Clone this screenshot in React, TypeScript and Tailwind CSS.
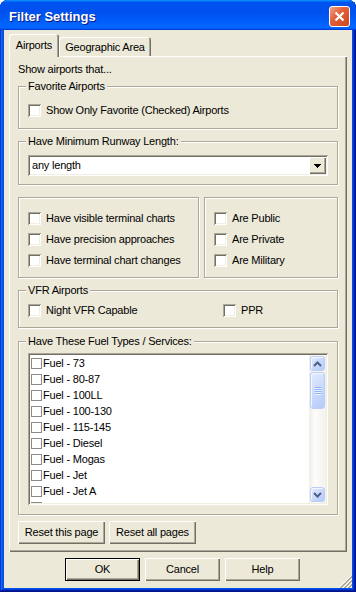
import type { ReactNode } from 'react';

// classic 3D edges (XP classic palette)
const RAISED = 'shadow-[inset_1px_1px_#fff,inset_-1px_-1px_#716f64,inset_-2px_-2px_#aca899]';
const SUNKEN = 'shadow-[inset_1px_1px_#aca899,inset_-1px_-1px_#fff,inset_2px_2px_#716f64,inset_-2px_-2px_#f1efe2]';
const ETCHED = 'border border-[#aca899] shadow-[inset_1px_1px_#fff,1px_1px_#fff]';

const FUELS = [
  'Fuel - 73',
  'Fuel - 80-87',
  'Fuel - 100LL',
  'Fuel - 100-130',
  'Fuel - 115-145',
  'Fuel - Diesel',
  'Fuel - Mogas',
  'Fuel - Jet',
  'Fuel - Jet A',
  'Fuel - Jet A-1',
];

// ─── Small controls ───────────────────────────────────────────────────────────

function CheckBox() {
  return <span className={`block h-[13px] w-[13px] shrink-0 bg-white ${SUNKEN}`} />;
}

function CheckRow({ label, className = '' }: { label: string; className?: string }) {
  return (
    <label className={`flex h-[13px] items-center gap-[5px] ${className}`}>
      <CheckBox />
      <span className="whitespace-nowrap">{label}</span>
    </label>
  );
}

function GroupBox({ title, className = '', children }: { title: string; className?: string; children: ReactNode }) {
  return (
    <fieldset className={`${ETCHED} ${className}`}>
      <legend className="ml-[7px] bg-[#ECE9D8] px-[2px] leading-[13px]">{title}</legend>
      {children}
    </fieldset>
  );
}

function Button({ label, width, isDefault }: { label: string; width: string; isDefault?: boolean }) {
  if (isDefault) {
    return (
      <div className={`h-[23px] ${width} border border-black`}>
        <div className={`flex h-full items-center justify-center bg-[#ECE9D8] ${RAISED}`}>{label}</div>
      </div>
    );
  }
  return (
    <div className={`flex h-[23px] ${width} items-center justify-center bg-[#ECE9D8] ${RAISED}`}>{label}</div>
  );
}

function DownTriangle() {
  return (
    <svg width="7" height="4" viewBox="0 0 7 4" shapeRendering="crispEdges">
      <rect x="0" y="0" width="7" height="1" fill="#000" />
      <rect x="1" y="1" width="5" height="1" fill="#000" />
      <rect x="2" y="2" width="3" height="1" fill="#000" />
      <rect x="3" y="3" width="1" height="1" fill="#000" />
    </svg>
  );
}

function ComboBox({ value }: { value: string }) {
  return (
    <div className={`flex h-[21px] bg-white p-[2px] ${SUNKEN}`}>
      <div className="flex-1 pl-[2px] leading-[17px]">{value}</div>
      <div className={`flex h-[17px] w-[17px] items-center justify-center bg-[#ECE9D8] ${RAISED}`}>
        <DownTriangle />
      </div>
    </div>
  );
}

// ─── Luna scrollbar ───────────────────────────────────────────────────────────

const LUNA_BTN =
  'rounded-[3px] border border-[#bccdf5] bg-[linear-gradient(135deg,#e4ecfe_0%,#c8d8fc_55%,#b6cbf9_100%)] shadow-[inset_1px_1px_#f4f8ff]';

function ScrollArrow({ up }: { up?: boolean }) {
  return (
    <div className="h-[17px] p-[1px]">
      <div className={`flex h-full items-center justify-center ${LUNA_BTN}`}>
        <svg width="9" height="6" viewBox="0 0 9 6">
          <path
            d={up ? 'M1 5 L4.5 1.5 L8 5' : 'M1 1 L4.5 4.5 L8 1'}
            fill="none"
            stroke="#4d6185"
            strokeWidth="2"
          />
        </svg>
      </div>
    </div>
  );
}

function ScrollBar() {
  return (
    <div className="flex w-[17px] flex-col bg-[linear-gradient(90deg,#eeede5,#fcfcfa_35%,#f3f1ec)]">
      <ScrollArrow up />
      <div className="flex-1 px-[1px]">
        <div className={`flex h-[37px] items-center justify-center ${LUNA_BTN}`}>
          <svg width="6" height="8" viewBox="0 0 6 8" shapeRendering="crispEdges">
            {[0, 2, 4, 6].map((y) => (
              <g key={y}>
                <rect x="0" y={y} width="6" height="1" fill="#8cb0f8" />
                <rect x="0" y={y + 1} width="6" height="1" fill="#eef4fe" />
              </g>
            ))}
          </svg>
        </div>
      </div>
      <ScrollArrow />
    </div>
  );
}

function FuelList() {
  return (
    <div className={`flex h-[152px] bg-white p-[2px] ${SUNKEN}`}>
      <div className="flex-1 overflow-hidden">
        {FUELS.map((f) => (
          <div key={f} className="flex h-[16px] items-center gap-[1px] pl-[1px]">
            <span className="block h-[11px] w-[11px] shrink-0 border border-[#8a8a8a] bg-white" />
            <span className="whitespace-nowrap">{f}</span>
          </div>
        ))}
      </div>
      <ScrollBar />
    </div>
  );
}

function SizeGrip() {
  const px: ReactNode[] = [];
  [10, 14, 18].forEach((d) => {
    for (let x = 0; x < 12; x++) {
      const cells: [number, string][] = [
        [d - x, '#fff'],
        [d + 1 - x, '#aca899'],
        [d + 2 - x, '#aca899'],
      ];
      cells.forEach(([y, c]) => {
        if (y >= 0 && y < 12) px.push(<rect key={`${d}-${x}-${y}`} x={x} y={y} width="1" height="1" fill={c} />);
      });
    }
  });
  return (
    <svg width="12" height="12" viewBox="0 0 12 12" shapeRendering="crispEdges" className="absolute bottom-0 right-0">
      {px}
    </svg>
  );
}

// ─── Dialog ───────────────────────────────────────────────────────────────────

export default function App() {
  return (
    <div className="h-[592px] w-[356px] bg-white font-['Liberation_Sans',Arial,sans-serif] text-[11px] leading-[13px] tracking-[-0.2px] text-black select-none">
      <div className="flex h-full flex-col rounded-t-[8px] bg-[#0550e4] shadow-[inset_-1px_-1px_#00138c,inset_1px_1px_#0831d9,inset_-2px_-2px_#001ea0,inset_2px_2px_#166aee,inset_-3px_-3px_#003bda,inset_3px_3px_#0855dd]">
        {/* Title bar */}
        <div className="flex h-[30px] items-center rounded-t-[8px] bg-[linear-gradient(180deg,#0997ff,#0053ee_8%,#0050ee_40%,#06f_88%,#06f_93%,#005bff_95%,#003dd7_96%,#003dd7)] pl-[9px] pr-[6px]">
          <span className="mt-[3px] flex-1 text-[13px] font-bold leading-[16px] tracking-normal text-white [text-shadow:1px_1px_#0a1883]">
            Filter Settings
          </span>
          <div className="mt-[3px] flex h-[21px] w-[21px] items-center justify-center rounded-[3px] border border-white bg-[linear-gradient(135deg,#f3a488_0%,#e2603b_40%,#d1461f_100%)]">
            <svg width="11" height="11" viewBox="0 0 11 11">
              <path d="M1.5 1.5 L9.5 9.5 M9.5 1.5 L1.5 9.5" stroke="#fff" strokeWidth="2.2" />
            </svg>
          </div>
        </div>

        {/* Body */}
        <div className="relative mx-[4px] mb-[4px] flex-1 bg-[#ECE9D8] pt-[4px]">
          {/* Tabs */}
          <div className="mx-[5px] flex h-[22px] items-end">
            <div className="relative z-10 -mb-px h-[23px] w-[50px] rounded-t-[3px] bg-[#ECE9D8] pt-[5px] text-center shadow-[inset_1px_1px_#fff,inset_-1px_0_#716f64,inset_-2px_0_#aca899]">
              Airports
            </div>
            <div className="h-[19px] w-[92px] rounded-t-[3px] pt-[4px] text-center shadow-[inset_1px_1px_#fff,inset_-1px_0_#716f64,inset_-2px_0_#aca899]">
              Geographic Area
            </div>
          </div>

          {/* Tab page */}
          <div className={`mx-[5px] flex flex-col bg-[#ECE9D8] px-[9px] pb-[8px] pt-[7px] shadow-[inset_1px_1px_#fff,inset_-1px_-1px_#716f64,inset_-2px_-2px_#aca899]`}>
            <p className="h-[13px]">Show airports that...</p>

            <GroupBox title="Favorite Airports" className="mt-[4px]">
              <div className="px-[9px] pb-[11px] pt-[11px]">
                <CheckRow label="Show Only Favorite (Checked) Airports" />
              </div>
            </GroupBox>

            <GroupBox title="Have Minimum Runway Length:" className="mt-[6px]">
              <div className="px-[9px] pb-[8px] pt-[7px]">
                <ComboBox value="any length" />
              </div>
            </GroupBox>

            <div className="mt-[12px] flex gap-[5px]">
              <div className={`flex w-[181px] flex-col gap-[8px] pb-[10px] pl-[9px] pt-[14px] ${ETCHED}`}>
                <CheckRow label="Have visible terminal charts" />
                <CheckRow label="Have precision approaches" />
                <CheckRow label="Have terminal chart changes" />
              </div>
              <div className={`flex flex-1 flex-col gap-[8px] pb-[10px] pl-[9px] pt-[14px] ${ETCHED}`}>
                <CheckRow label="Are Public" />
                <CheckRow label="Are Private" />
                <CheckRow label="Are Military" />
              </div>
            </div>

            <GroupBox title="VFR Airports" className="mt-[6px]">
              <div className="flex px-[9px] pb-[10px] pt-[7px]">
                <CheckRow label="Night VFR Capable" className="w-[195px]" />
                <CheckRow label="PPR" />
              </div>
            </GroupBox>

            <GroupBox title="Have These Fuel Types / Services:" className="mt-[7px]">
              <div className="px-[9px] pb-[9px] pt-[5px]">
                <FuelList />
              </div>
            </GroupBox>

            <div className="mt-[6px] flex gap-[4px]">
              <Button label="Reset this page" width="w-[87px]" />
              <Button label="Reset all pages" width="w-[87px]" />
            </div>
          </div>

          {/* Dialog buttons */}
          <div className="ml-[61px] mt-[6px] flex gap-[5px]">
            <Button label="OK" width="w-[75px]" isDefault />
            <Button label="Cancel" width="w-[75px]" />
            <Button label="Help" width="w-[75px]" />
          </div>

          <SizeGrip />
        </div>
      </div>
    </div>
  );
}
